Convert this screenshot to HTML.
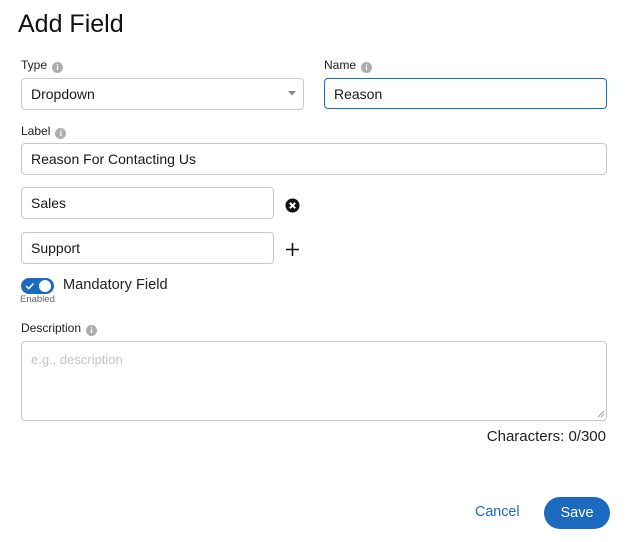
<!DOCTYPE html>
<html><head><style>
*{box-sizing:border-box;margin:0;padding:0}
body{width:627px;height:542px;background:#fff;font-family:"Liberation Sans",Arial,sans-serif;color:#181818;position:relative;overflow:hidden}
.a{position:absolute}
.lbl{font-size:12px;color:#222;line-height:14px}
.i{display:inline-block;width:11px;height:11px;border-radius:50%;background:#aeaeae;color:#fff;font-size:8px;font-weight:bold;text-align:center;line-height:11px;vertical-align:-1px;margin-left:5px;font-family:"Liberation Serif",serif}
.box{position:absolute;border:1px solid #c9c9c9;border-radius:4px;font-size:14px;padding-left:9px;display:flex;align-items:center;background:#fff}
</style></head><body>
<div class="a" style="left:18px;top:10px;font-size:25px;color:#111">Add Field</div>
<div class="a lbl" style="left:21px;top:58px">Type<span class="i">i</span></div>
<div class="box" style="left:21px;top:78px;width:283px;height:32px">Dropdown
<svg class="a" style="left:266px;top:12px" width="8" height="5"><path d="M0 0H8L4 4.5z" fill="#888"/></svg></div>
<div class="a lbl" style="left:324px;top:58px">Name<span class="i">i</span></div>
<div class="box" style="left:324px;top:78px;width:283px;height:31px;border-color:#1b6ac0">Reason</div>
<div class="a lbl" style="left:21px;top:124px">Label<span class="i">i</span></div>
<div class="box" style="left:21px;top:143px;width:586px;height:32px">Reason For Contacting Us</div>
<div class="box" style="left:21px;top:187px;width:253px;height:32px">Sales</div>
<svg class="a" style="left:285px;top:198px" width="15" height="15"><circle cx="7.5" cy="7.5" r="7" fill="#111"/><path d="M4.8 4.8L10.2 10.2M10.2 4.8L4.8 10.2" stroke="#fff" stroke-width="2"/></svg>
<div class="box" style="left:21px;top:232px;width:253px;height:32px">Support</div>
<svg class="a" style="left:285px;top:242px" width="15" height="15"><path d="M7.5 1V14M1 7.5H14" stroke="#111" stroke-width="1.6"/></svg>
<div class="a" style="left:21px;top:278px;width:33px;height:16px;border-radius:8px;background:#1b6ac0"></div>
<div class="a" style="left:39px;top:280px;width:12px;height:12px;border-radius:50%;background:#fff"></div>
<svg class="a" style="left:25px;top:282px" width="10" height="8"><path d="M1 4L3.8 6.5L8.5 1.5" stroke="#fff" stroke-width="1.6" fill="none"/></svg>
<div class="a" style="left:63px;top:277px;font-size:14.6px;color:#222">Mandatory Field</div>
<div class="a" style="left:20px;top:294px;font-size:9.5px;color:#666">Enabled</div>
<div class="a lbl" style="left:21px;top:321px">Description<span class="i">i</span></div>
<div class="a" style="left:21px;top:341px;width:586px;height:80px;border:1px solid #c9c9c9;border-radius:4px;font-size:13px;color:#c4c4c4;padding:10px 9px">e.g., description</div>
<svg class="a" style="left:597px;top:410px" width="8" height="8"><path d="M7 1L1 7M7 4L4 7" stroke="#888" stroke-width="0.8"/></svg>
<div class="a" style="right:21px;top:428px;font-size:15px;color:#222">Characters: 0/300</div>
<div class="a" style="left:475px;top:504px;font-size:14.3px;color:#1b6ac0">Cancel</div>
<div class="a" style="left:544px;top:497px;width:66px;height:32px;border-radius:16px;background:#1b6ac0;color:#fff;font-size:14.5px;text-align:center;line-height:32px">Save</div>
</body></html>
